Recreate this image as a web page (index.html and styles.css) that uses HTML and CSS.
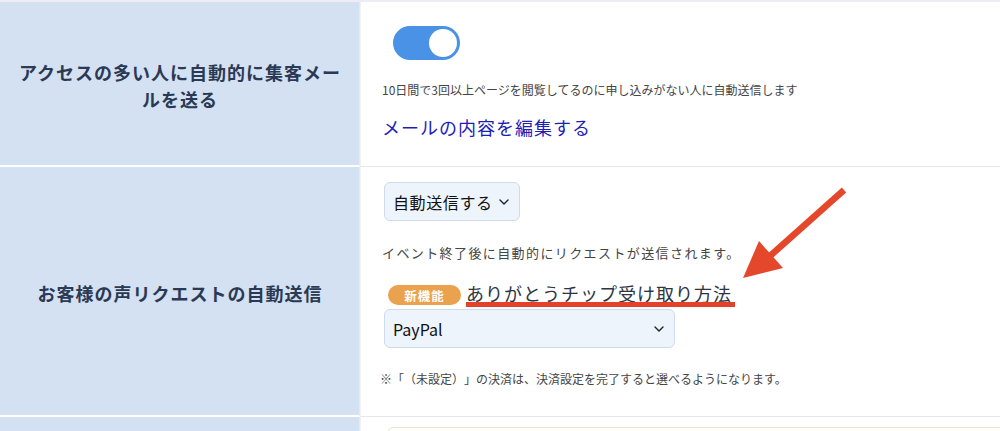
FILE: index.html
```html
<!DOCTYPE html>
<html lang="ja">
<head>
<meta charset="utf-8">
<title>設定</title>
<link rel="stylesheet" href="styles.css">
</head>
<body>
<div class="page">
  <div class="table">
    <div class="row row-mail">
      <div class="label">アクセスの多い人に自動的に集客メールを送る</div>
      <div class="cell cell-mail">
        <div class="toggle"><span class="knob"></span></div>
        <p class="desc desc-mail">10日間で3回以上ページを閲覧してるのに申し込みがない人に自動送信します</p>
        <a class="edit-link" href="#">メールの内容を編集する</a>
      </div>
    </div>
    <div class="row row-voice">
      <div class="label">お客様の声リクエストの自動送信</div>
      <div class="cell cell-voice">
        <div class="select select-auto"><span>自動送信する</span><svg class="chev" width="10" height="6" viewBox="0 0 10 6"><path d="M1 1l4 4 4-4" fill="none" stroke="#222" stroke-width="1.4" stroke-linecap="round" stroke-linejoin="round"/></svg></div>
        <p class="desc desc-voice">イベント終了後に自動的にリクエストが送信されます。</p>
        <div class="tip-row">
          <span class="badge">新機能</span>
          <a class="tip-link" href="#">ありがとうチップ受け取り方法</a>
          <span class="mark-line"></span>
        </div>
        <div class="select select-pay"><span>PayPal</span><svg class="chev" width="10" height="6" viewBox="0 0 10 6"><path d="M1 1l4 4 4-4" fill="none" stroke="#222" stroke-width="1.4" stroke-linecap="round" stroke-linejoin="round"/></svg></div>
        <p class="desc note">※「（未設定）」の決済は、決済設定を完了すると選べるようになります。</p>
      </div>
    </div>
    <div class="row row-next">
      <div class="label"></div>
      <div class="cell cell-next"><div class="next-box"></div></div>
    </div>
  </div>
  <svg class="arrow" width="1000" height="431" viewBox="0 0 1000 431">
    <line x1="844" y1="190" x2="770" y2="256" stroke="#e5472b" stroke-width="6.5" stroke-linecap="butt"/>
    <polygon points="743,278 759,241 783,268" fill="#e5472b"/>
  </svg>
</div>
</body>
</html>
```
FILE: styles.css
```css
* { box-sizing: border-box; }
html, body { margin: 0; padding: 0; background: #fff; }
body {
  font-family: "Noto Sans CJK JP", "Noto Sans", sans-serif;
  color: #333;
  width: 1000px;
  height: 431px;
  overflow: hidden;
  text-spacing-trim: space-all;
}
.page { position: relative; width: 1000px; height: 431px; }
.table {
  border-top: 2px solid #eceef3;
  display: flex;
  flex-direction: column;
}
.row {
  display: grid;
  grid-template-columns: 360px 1fr;
}
.label {
  background: #d4e1f2;
  border-bottom: 2px solid #fff;
  border-right: 1px solid #e3eaf4;
  display: flex;
  align-items: center;
  justify-content: center;
  text-align: center;
  padding: 4px 16px 0 17px;
  font-weight: 700;
  font-size: 18px;
  letter-spacing: 1px;
  line-height: 27px;
  color: #2a3954;
}
.cell {
  border-bottom: 1px solid #e6e8ee;
  border-left: 1px solid #f1f2f5;
  padding-left: 21px;
  display: flex;
  flex-direction: column;
  align-items: flex-start;
}
.row-mail { height: 165px; }
.row-voice { height: 250px; }
.row-next { height: 20px; }
.cell-mail { padding-top: 24px; }
.toggle {
  width: 67px;
  height: 34px;
  border-radius: 17px;
  background: #4a92e6;
  margin-left: 11px;
  position: relative;
}
.knob {
  position: absolute;
  right: 3px;
  top: 3px;
  width: 28px;
  height: 28px;
  border-radius: 50%;
  background: #fff;
}
.desc {
  margin: 0;
  font-size: 12px;
  line-height: 18px;
  color: #444;
}
.desc-mail { margin-top: 21px; }
.edit-link {
  margin-top: 15px;
  font-size: 18px;
  letter-spacing: 1px;
  line-height: 26px;
  color: #1d1db8;
  text-decoration: none;
}
.cell-voice { padding-top: 15px; }
.select {
  height: 39px;
  margin-left: 2px;
  background: #edf4fc;
  border: 1px solid #cfdbe8;
  border-radius: 6px;
  display: flex;
  align-items: center;
  justify-content: space-between;
  padding: 0 10px 0 8px;
  font-size: 16px;
  color: #111;
}
.select-auto { width: 136px; letter-spacing: 0.6px; }
.select-pay { width: 291px; margin-top: 2px; }
.chev { flex: none; }
.desc-voice {
  margin-top: 22px;
  font-size: 13px;
  letter-spacing: 1.4px;
  line-height: 20px;
}
.tip-row {
  position: relative;
  margin-top: 20px;
  display: flex;
  align-items: center;
  height: 24px;
  margin-left: 6px;
}
.badge {
  width: 73px;
  height: 20px;
  border-radius: 10px;
  background: #eba24f;
  color: #fff;
  font-size: 12.5px;
  font-weight: 700;
  letter-spacing: 1px;
  display: flex;
  align-items: center;
  justify-content: center;
}
.tip-link {
  margin-left: 5px;
  margin-top: -4px;
  font-size: 18px;
  letter-spacing: 1px;
  line-height: 24px;
  color: #2e3442;
  text-decoration: underline;
  text-underline-offset: 2px;
  text-decoration-thickness: 1px;
}
.mark-line {
  position: absolute;
  left: 78px;
  width: 269px;
  top: 19px;
  height: 5px;
  background: #e3412a;
}
.note {
  margin-top: 22px;
  margin-left: -2px;
}
.cell-next { padding-left: 27px; padding-top: 10px; overflow: hidden; }
.next-box {
  width: 620px;
  height: 30px;
  border: 1px solid #ebe6d4;
  border-radius: 8px;
  background: #fffefa;
}
.arrow { position: absolute; left: 0; top: 0; pointer-events: none; }
```
